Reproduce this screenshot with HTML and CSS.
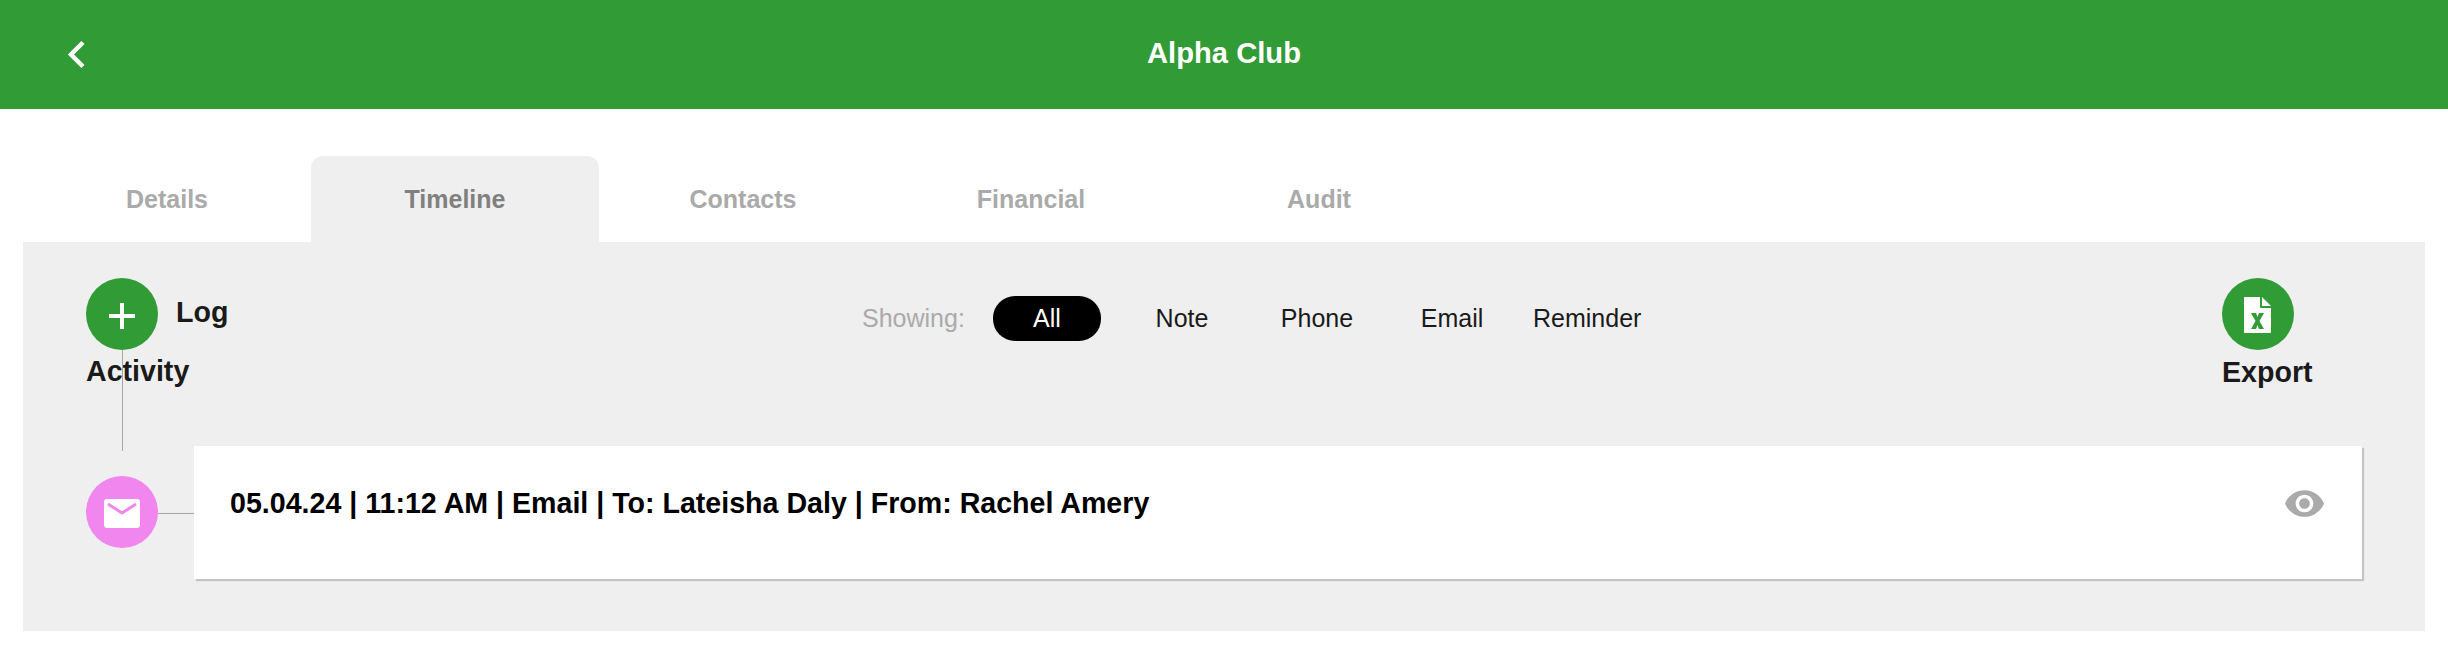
FILE: index.html
```html
<!DOCTYPE html>
<html lang="en">
<head>
<meta charset="utf-8">
<title>Alpha Club</title>
<link rel="stylesheet" href="styles.css">
</head>
<body>
<header class="topbar">
  <a class="back" aria-label="Back">
    <svg class="back-icon" viewBox="0 0 19 29"><path d="M16 2.5 4 14.5 16 26.500"/></svg>
  </a>
  <h1 class="title">Alpha Club</h1>
</header>
<nav class="tabs">
  <div class="tab">Details</div>
  <div class="tab tab-active">Timeline</div>
  <div class="tab">Contacts</div>
  <div class="tab">Financial</div>
  <div class="tab">Audit</div>
</nav>
<main class="panel">
  <section class="toolbar">
    <div class="log">
      <span class="circle circle-green log-circle">
        <svg class="plus-icon" viewBox="0 0 26 26"><path d="M11 0h4v11h11v4H15v11h-4V15H0v-4h11z"/></svg>
      </span>
      <span class="log-first">Log</span> Activity
    </div>
    <div class="filters">
      <span class="showing">Showing:</span>
      <span class="filter filter-active">All</span>
      <span class="filter">Note</span>
      <span class="filter">Phone</span>
      <span class="filter">Email</span>
      <span class="filter">Reminder</span>
    </div>
    <div class="export">
      <span class="circle circle-green">
        <svg class="excel-icon" viewBox="0 0 27 36">
          <path class="sheet" d="M0 1a1 1 0 0 1 1-1h15v10a1 1 0 0 0 1 1h10v24a1 1 0 0 1-1 1H1a1 1 0 0 1-1-1z"/>
          <path class="sheet" d="M18 0l9 9h-9z"/>
          <path class="excel-x" d="M7 16h5l1.500 4 1.500-4h5l-4.500 8 4.500 8h-5l-1.500-4-1.500 4H7l4.500-8z"/>
        </svg>
      </span>
      <span class="export-label">Export</span>
    </div>
  </section>
  <section class="entry">
    <span class="circle circle-pink entry-node">
      <svg class="mail-icon" viewBox="0 0 36 29">
        <rect class="mail-body" width="36" height="29" rx="3"/>
        <path class="mail-flap" d="M4 5 18 14 32 5"/>
      </svg>
    </span>
    <article class="card">
      <p class="card-text">05.04.24 | 11:12 AM | Email | To: Lateisha Daly | From: Rachel Amery</p>
      <svg class="eye-icon" viewBox="1 4.5 22 15"><path d="M12 4.500C7 4.500 2.730 7.610 1 12c1.730 4.390 6 7.500 11 7.500s9.270-3.110 11-7.500c-1.730-4.390-6-7.500-11-7.500zM12 17c-2.760 0-5-2.240-5-5s2.240-5 5-5 5 2.240 5 5-2.240 5-5 5zm0-8c-1.660 0-3 1.340-3 3s1.340 3 3 3 3-1.340 3-3-1.340-3-3-3z"/></svg>
    </article>
  </section>
</main>
</body>
</html>
```
FILE: styles.css
```css
* { box-sizing: border-box; }
html, body { margin: 0; padding: 0; background: #fff; }
body { font-family: "Liberation Sans", Arial, sans-serif; color: #1a1a1a; }

.topbar {
  height: 109px;
  background: #319b35;
  display: flex;
  align-items: center;
  position: relative;
}
.back { display: flex; margin-left: 67px; }
.back-icon { width: 19px; height: 29px; fill: none; stroke: #fff; stroke-width: 4.5; }
.title {
  position: absolute;
  left: 0;
  right: 0;
  top: 36px;
  margin: 0;
  text-align: center;
  color: #fff;
  font-size: 29.2px;
  line-height: 34px;
  font-weight: 700;
}

.tabs { display: flex; margin: 47px 0 0 23px; }
.tab {
  width: 288px;
  height: 86px;
  display: flex;
  align-items: center;
  justify-content: center;
  font-size: 25px;
  font-weight: 700;
  color: #aaa;
}
.tab-active { background: #efefef; color: #808080; border-radius: 12px 12px 0 0; }

.panel {
  margin: 0 23px;
  height: 389px;
  background: #efefef;
  padding: 36px 63px 0;
}

.toolbar { display: flex; align-items: flex-start; height: 168px; }
.circle {
  width: 72px;
  height: 72px;
  border-radius: 50%;
  display: flex;
  align-items: center;
  justify-content: center;
}
.circle-green { background: #319b35; }
.circle-pink { background: #f086ee; }

.log {
  width: 160px;
  flex: none;
  font-size: 28.6px;
  font-weight: 700;
  line-height: 42px;
}
.log-circle { float: left; margin-right: 18px; }
.log-first { line-height: 68px; }
.plus-icon { width: 26px; height: 26px; fill: #fff; margin-top: 3px; }

.filters {
  display: flex;
  align-items: center;
  gap: 27px;
  margin: 18px 0 0 616px;
  font-size: 25px;
}
.showing { color: #aaa; width: 104px; white-space: nowrap; }
.filter { width: 108px; height: 45px; line-height: 45px; text-align: center; white-space: nowrap; }
.filter-active { background: #000; color: #fff; border-radius: 22px; }

.export {
  margin-left: auto;
  width: 140px;
  font-size: 28.6px;
  font-weight: 700;
  line-height: 42px;
}
.export-label { display: block; padding-top: 1px; }
.excel-icon { width: 27px; height: 36px; margin: 2px 1px 0 0; }
.sheet { fill: #fff; }
.excel-x { fill: #319b35; }

.entry { display: flex; align-items: flex-start; justify-content: space-between; }
.entry-node { flex: none; position: relative; margin-top: 30px; }
.entry-node::before {
  content: "";
  position: absolute;
  left: 36px;
  bottom: 97px;
  width: 1px;
  height: 101px;
  background: #a6a6a6;
}
.entry-node::after {
  content: "";
  position: absolute;
  left: 72px;
  top: 37px;
  width: 36px;
  height: 1px;
  background: #a6a6a6;
}
.mail-icon { width: 36px; height: 29px; margin-top: 3px; }
.mail-body { fill: #fff; }
.mail-flap { fill: none; stroke: #f086ee; stroke-width: 3; }

.card {
  width: 2168px;
  height: 133px;
  background: #fff;
  box-shadow: 2px 2px 1px #c4c4c4;
  padding: 37px 38px 0 36px;
  display: flex;
  justify-content: space-between;
  align-items: flex-start;
}
.card-text { margin: 0; font-size: 28.6px; font-weight: 700; line-height: 40px; color: #000; }
.eye-icon { width: 39px; height: 27px; margin-top: 7px; fill: #aaa; }
```
